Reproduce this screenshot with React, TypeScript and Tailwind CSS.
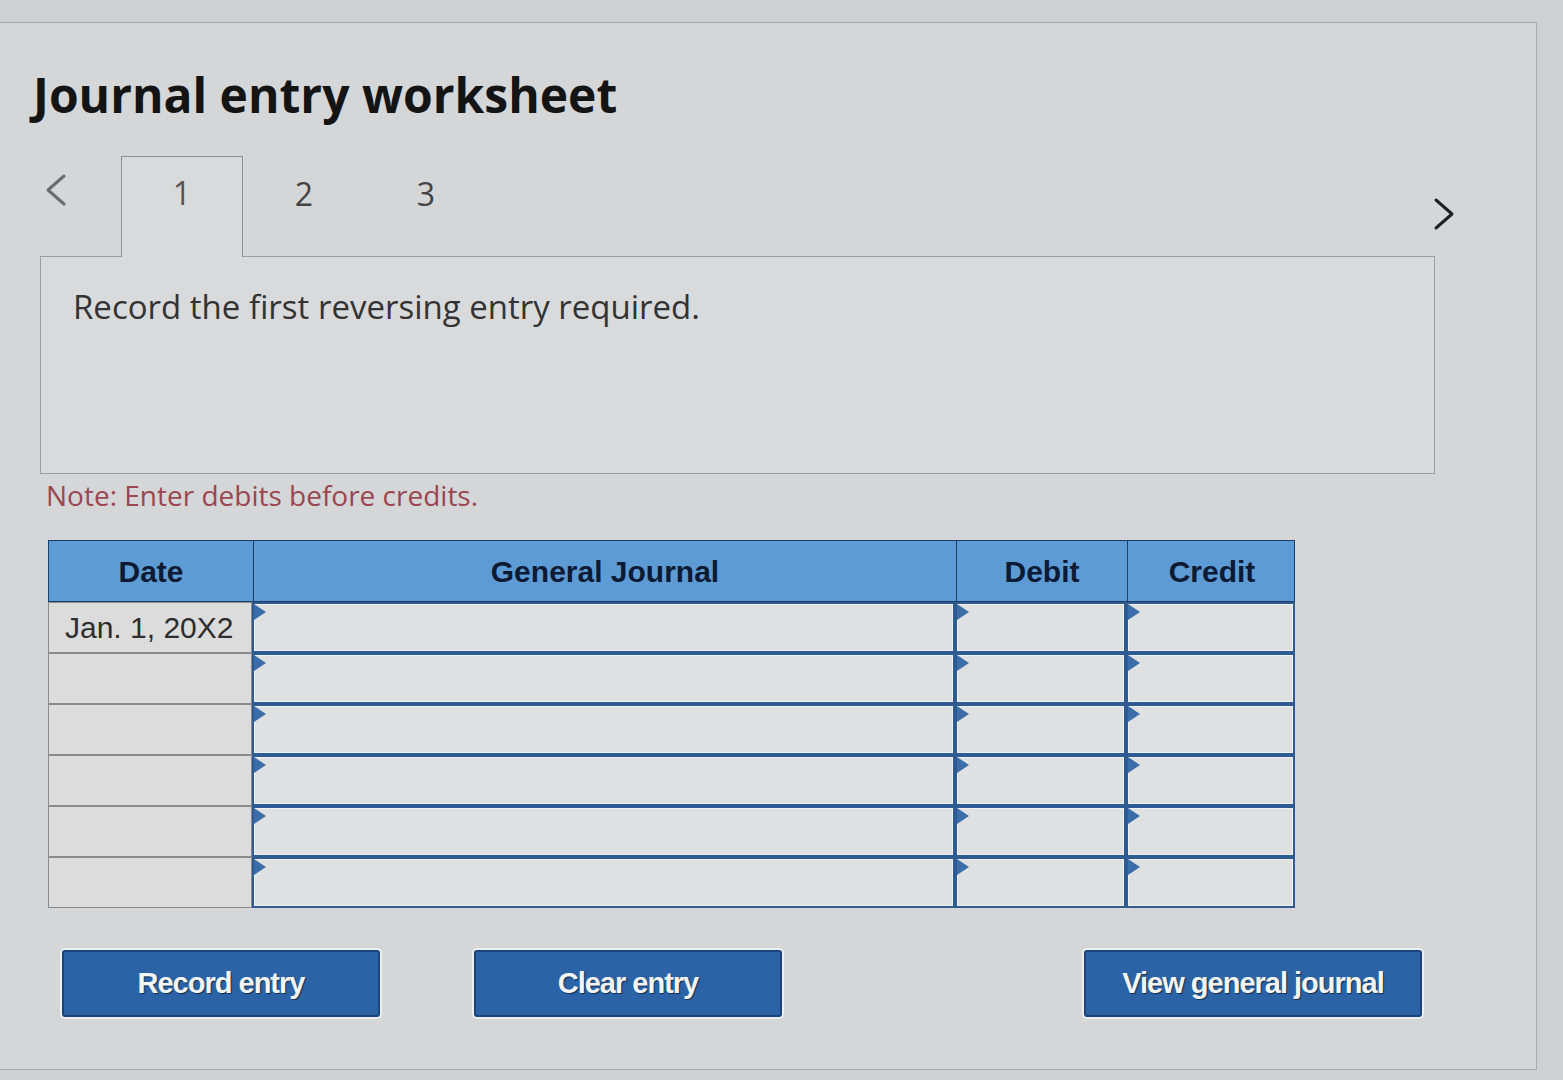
import React from "react";

const rows = [
  { date: "Jan. 1, 20X2" },
  { date: "" },
  { date: "" },
  { date: "" },
  { date: "" },
  { date: "" },
];

function Chevron({ dir }: { dir: "left" | "right" }) {
  return (
    <svg width="28" height="36" viewBox="0 0 28 36" fill="none">
      <polyline
        points={dir === "left" ? "22,4 6,18 22,32" : "6,4 22,18 6,32"}
        stroke={dir === "left" ? "#6b6c6e" : "#1f2022"}
        strokeWidth={3}
        strokeLinecap="round"
        strokeLinejoin="round"
      />
    </svg>
  );
}

function InputCell() {
  return (
    <div className="relative h-[51px] border-2 border-[#2e5c92] bg-[#dfe0e1] shadow-[inset_0_0_0_1px_#eef0f2]">
      <svg className="absolute left-0 top-0" width="12" height="16" viewBox="0 0 12 16">
        <polygon points="0,0 12,8 0,16" fill="#3b6ea9" />
      </svg>
    </div>
  );
}

function ActionButton({ label, width }: { label: string; width: string }) {
  return (
    <button
      className={`${width} h-[67px] rounded-[3px] border-2 border-[#1b457a] bg-[#2b63a6] text-[29px] font-bold tracking-[-1px] text-[#f4f5f7] shadow-[0_0_0_2px_#eceef0] [text-shadow:1px_1px_1px_rgba(0,0,0,0.55)] font-['Liberation_Sans',Arial,sans-serif]`}
    >
      {label}
    </button>
  );
}

export default function App() {
  return (
    <div className="min-h-screen bg-[#cfd0d2] pt-[22px] font-['Open_Sans',sans-serif]">
      <div className="h-[1048px] w-[1537px] border-b border-r border-t border-[#a9aaac] bg-[#d5d6d8]">
        {/* Title */}
        <h1 className="pl-[33px] pt-[40px] text-[48px] font-bold leading-[64px] text-[#141414]">
          Journal entry worksheet
        </h1>

        {/* Tabs */}
        <div className="mt-[29px] flex h-[100px] items-start pl-[42px] pr-[78px]">
          <div className="mt-[16px]">
            <Chevron dir="left" />
          </div>
          <div className="relative z-10 -mb-px ml-[51px] flex h-[101px] w-[122px] justify-center border-l border-r border-t border-[#8e8f91] bg-[#d9dadc] pt-[14px] text-[32px] leading-[44px] text-[#555]">
            1
          </div>
          <div className="flex w-[122px] justify-center pt-[16px] text-[32px] leading-[44px] text-[#444]">
            2
          </div>
          <div className="flex w-[122px] justify-center pt-[16px] text-[32px] leading-[44px] text-[#444]">
            3
          </div>
          <div className="ml-auto mt-[40px]">
            <Chevron dir="right" />
          </div>
        </div>

        {/* Instruction box */}
        <div className="ml-[40px] h-[218px] w-[1395px] border border-[#9d9ea0] bg-[#d9dadc] pl-[32px] pt-[28px] text-[33px] leading-[44px] text-[#333]">
          Record the first reversing entry required.
        </div>

        <p className="ml-[46px] mt-[2px] text-[28px] leading-[38px] text-[#9b4650]">
          Note: Enter debits before credits.
        </p>

        {/* Journal table */}
        <div className="ml-[48px] mt-[26px] w-[1247px] font-['Liberation_Sans',Arial,sans-serif]">
          <div className="grid grid-cols-[204px_703px_171px_169px] border border-[#1d3c66] bg-[#5d9bd4] text-[30px] font-bold text-[#0c1a33]">
            <div className="flex h-[60px] items-center justify-center">Date</div>
            <div className="flex h-[60px] items-center justify-center border-l border-[#1d3c66]">General Journal</div>
            <div className="flex h-[60px] items-center justify-center border-l border-[#1d3c66]">Debit</div>
            <div className="flex h-[60px] items-center justify-center border-l border-[#1d3c66]">Credit</div>
          </div>
          {rows.map((r, i) => (
            <div key={i} className="grid grid-cols-[204px_703px_171px_169px]">
              <div className="flex h-[51px] items-center border border-[#8a8b8d] bg-[#dcdcdd] pl-[16px] text-[30px] text-[#2e2e2e]">
                {r.date}
              </div>
              <InputCell />
              <InputCell />
              <InputCell />
            </div>
          ))}
        </div>

        {/* Buttons */}
        <div className="mt-[42px] flex pl-[62px]">
          <ActionButton label="Record entry" width="w-[318px]" />
          <div className="ml-[94px]">
            <ActionButton label="Clear entry" width="w-[308px]" />
          </div>
          <div className="ml-[302px]">
            <ActionButton label="View general journal" width="w-[338px]" />
          </div>
        </div>
      </div>
    </div>
  );
}
